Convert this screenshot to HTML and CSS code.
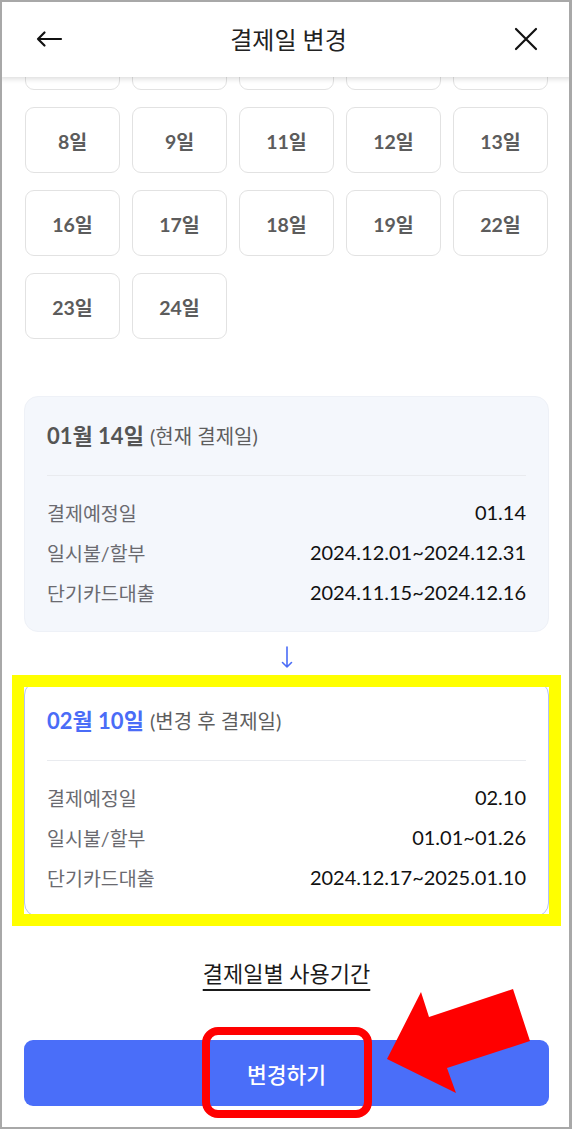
FILE: index.html
```html
<!DOCTYPE html>
<html lang="ko">
<head>
<meta charset="utf-8">
<title>결제일 변경</title>
<link rel="stylesheet" href="styles.css">
</head>
<body>
<div class="frame">
  <main class="content">
    <div class="days">
      <button class="day">1일</button>
      <button class="day">2일</button>
      <button class="day">3일</button>
      <button class="day">5일</button>
      <button class="day">7일</button>
      <button class="day">8일</button>
      <button class="day">9일</button>
      <button class="day">11일</button>
      <button class="day">12일</button>
      <button class="day">13일</button>
      <button class="day">16일</button>
      <button class="day">17일</button>
      <button class="day">18일</button>
      <button class="day">19일</button>
      <button class="day">22일</button>
      <button class="day">23일</button>
      <button class="day">24일</button>
    </div>

    <section class="card card-current">
      <h2 class="card-title"><strong>01월 14일</strong> <span>(현재 결제일)</span></h2>
      <div class="card-rows">
        <div class="row"><span class="label">결제예정일</span><span class="value">01.14</span></div>
        <div class="row"><span class="label">일시불/할부</span><span class="value">2024.12.01~2024.12.31</span></div>
        <div class="row"><span class="label">단기카드대출</span><span class="value">2024.11.15~2024.12.16</span></div>
      </div>
    </section>

    <div class="down">
      <svg width="14" height="24" viewBox="0 0 14 24" fill="none" stroke="#4a6cf7" stroke-width="1.6" stroke-linecap="round" stroke-linejoin="round"><path d="M7 2v20M2.5 17.5L7 22l4.5-4.5"/></svg>
    </div>

    <section class="card card-next">
      <h2 class="card-title"><strong>02월 10일</strong> <span>(변경 후 결제일)</span></h2>
      <div class="card-rows">
        <div class="row"><span class="label">결제예정일</span><span class="value">02.10</span></div>
        <div class="row"><span class="label">일시불/할부</span><span class="value">01.01~01.26</span></div>
        <div class="row"><span class="label">단기카드대출</span><span class="value">2024.12.17~2025.01.10</span></div>
      </div>
    </section>

    <div class="link-wrap"><a class="period-link" href="#">결제일별 사용기간</a></div>

    <button class="submit">변경하기</button>
  </main>

  <header class="topbar">
    <svg class="back" width="28" height="20" viewBox="0 0 28 20" fill="none" stroke="#111" stroke-width="2.2" stroke-linecap="round" stroke-linejoin="round"><path d="M26 10H3M9.5 3.5L3 10l6.5 6.5"/></svg>
    <h1 class="title">결제일 변경</h1>
    <svg class="close" width="24" height="24" viewBox="0 0 24 24" fill="none" stroke="#111" stroke-width="2.2" stroke-linecap="round"><path d="M2 2l20 20M22 2L2 22"/></svg>
  </header>

  <div class="mark-yellow"></div>
  <div class="mark-red"></div>
  <svg class="mark-arrow" width="572" height="1129" viewBox="0 0 572 1129"><polygon points="387,1059 421,992 429,1017 513,989 530,1041 447,1068 456,1093" fill="#ff0000"/></svg>
</div>
</body>
</html>
```

FILE: styles.css
```css
* { box-sizing: border-box; }
html, body { margin: 0; padding: 0; background: #fff; }
body {
  font-family: "Lato", "Noto Sans CJK KR", sans-serif;
  color: #111;
}
.frame {
  position: relative;
  width: 572px;
  height: 1129px;
  overflow: hidden;
  background: #fff;
}
.frame::after {
  content: "";
  position: absolute;
  inset: 0;
  border: 2px solid #a8a8a8;
  border-right-width: 3px;
  pointer-events: none;
  z-index: 10;
}
.content {
  padding: 24px 23px 0 24px;
}
.days {
  display: grid;
  grid-template-columns: repeat(5, 1fr);
  grid-auto-rows: 66px;
  column-gap: 12px;
  row-gap: 17px;
  margin: 0 1px;
}
.day {
  border: 1px solid #e2e2e2;
  border-radius: 9px;
  background: #fff;
  font-family: "Lato", "Noto Sans CJK KR", sans-serif;
  font-weight: 700;
  font-size: 19.5px;
  color: #5c5c5c;
  padding: 0;
}
.card {
  border-radius: 14px;
  padding: 24px 23px 20px;
  height: 236px;
}
.card-current {
  margin-top: 57px;
  background: #f4f7fc;
  border: 1px solid #eef1f7;
  padding: 23px 22px 19px;
}
.card-next {
  background: #fff;
  border: 1px solid #b3c2f4;
  padding: 23px 22px 19px;
}
.card-title {
  margin: 0;
  height: 30px;
  line-height: 30px;
  font-weight: 400;
  color: #555;
  white-space: nowrap;
}
.card-title strong {
  font-size: 22px;
  font-weight: 700;
}
.card-title span {
  font-size: 20px;
  color: #5e5e5e;
}
.card-next .card-title strong { color: #4a6cf7; }
.card-rows {
  margin-top: 25px;
  border-top: 1px solid #e9ebef;
  padding-top: 16px;
}
.row {
  display: flex;
  justify-content: space-between;
  align-items: center;
  height: 40px;
}
.label {
  font-size: 19.5px;
  color: #6a6a70;
}
.value {
  font-size: 20px;
  color: #111;
}
.down {
  height: 49px;
  display: flex;
  align-items: center;
  justify-content: center;
}
.down svg { margin-left: 1px; }
.link-wrap {
  margin-top: 43px;
  text-align: center;
  height: 28px;
  line-height: 28px;
}
.period-link {
  font-size: 22px;
  color: #1a1a1a;
  text-decoration: underline;
  text-decoration-thickness: 2px;
  text-underline-offset: 7px;
}
.submit {
  display: block;
  width: 100%;
  height: 66px;
  margin-top: 52px;
  border: 0;
  border-radius: 9px;
  background: #4a6ef9;
  color: #fff;
  font-family: "Lato", "Noto Sans CJK KR", sans-serif;
  font-size: 21.5px;
  font-weight: 500;
}
.topbar {
  position: absolute;
  top: 0;
  left: 0;
  right: 0;
  height: 77px;
  background: #fff;
  box-shadow: 0 2px 5px rgba(0, 0, 0, 0.14);
  display: flex;
  align-items: center;
  justify-content: space-between;
  padding: 0 34px 0 35px;
  z-index: 5;
}
.title {
  margin: 0;
  font-size: 24px;
  font-weight: 400;
  color: #222;
}
.back { display: block; }
.close { display: block; margin-top: 1px; }
.mark-yellow {
  position: absolute;
  left: 12px;
  top: 675px;
  width: 549px;
  height: 251px;
  border: 12px solid #ffff00;
  z-index: 6;
}
.mark-red {
  position: absolute;
  left: 202px;
  top: 1027px;
  width: 170px;
  height: 91px;
  border: 8px solid #ff0000;
  border-radius: 16px;
  z-index: 6;
}
.mark-arrow {
  position: absolute;
  left: 0;
  top: 0;
  z-index: 7;
  pointer-events: none;
}
```
